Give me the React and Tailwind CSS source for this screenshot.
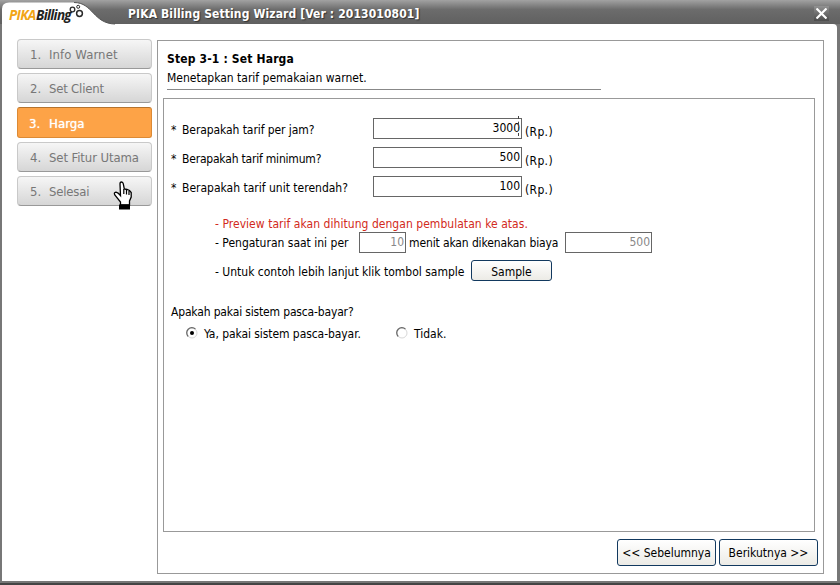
import React from "react";

const steps = [
  { no: "1.", label: "Info Warnet", track: "tracking-[0.1px]" },
  { no: "2.", label: "Set Client", track: "tracking-[-0.2px]" },
  { no: "3.", label: "Harga", track: "tracking-[0.1px]", active: true },
  { no: "4.", label: "Set Fitur Utama", track: "tracking-[-0.1px]" },
  { no: "5.", label: "Selesai", track: "tracking-[-0.2px]" },
];

const prices = [
  { label: "Berapakah tarif per jam?", value: "3000", caret: true, track: "tracking-[-0.08px]" },
  { label: "Berapakah tarif minimum?", value: "500", track: "tracking-[-0.2px]" },
  { label: "Berapakah tarif unit terendah?", value: "100", track: "" },
];

const Logo = () => (
  <div className="relative flex h-6 w-[128px] shrink-0 items-start">
    <svg className="absolute left-0 top-0" width="128" height="25" viewBox="0 0 128 25">
      <path d="M2 25V9Q2 2.500 9 2.500H74C93 2.500 93 23.500 115 24L118 25Z" fill="#fff" />
      <path d="M74 2.500C93 2.500 93 23.500 115 24" fill="none" stroke="#555" strokeWidth="1" />
      <g fill="none" stroke="#2b2b2b">
        <circle cx="72.500" cy="9.500" r="2.300" strokeWidth="1.300" />
        <circle cx="78.200" cy="6.800" r="1.500" strokeWidth="1" />
        <circle cx="79.500" cy="13.500" r="2.900" strokeWidth="1.500" />
      </g>
    </svg>
    <div className="relative ml-[9px] mt-[7px] flex font-['Open_Sans','Noto_Sans',sans-serif] text-[13.500px] font-bold italic leading-4">
      <span className="w-[27px] tracking-[-0.7px] text-[#f2a516]">PIKA</span>
      <span className="tracking-[-0.7px] text-[#222]">Billing</span>
    </div>
  </div>
);

const TitleBar = () => (
  <div className="flex h-6 items-start bg-linear-to-b from-[#a2a2a2] via-[#6c6c6c] via-40% to-[#606060]">
    <Logo />
    <h1 className="grow whitespace-nowrap pt-[6px] text-[12px] font-bold leading-4 tracking-[0.12px] text-white [text-shadow:1px_1px_1px_#333]">
      PIKA Billing Setting Wizard [Ver : 2013010801]
    </h1>
    <button className="mr-[11px] mt-[6px] flex h-[15px] w-[15px] items-center justify-center bg-linear-to-b from-[#929292] to-[#4c4c4c]">
      <svg width="11" height="11" viewBox="0 0 11 11" stroke="#fff" strokeWidth="2.200">
        <path d="M0.500 0.500L10.500 10.500M10.500 0.500L0.500 10.500" />
      </svg>
    </button>
  </div>
);

const StepButton = ({ no, label, track, active }) => (
  <button
    className={
      active
        ? "flex h-[31px] w-[135px] items-center rounded-[3px] border border-[#dc8a35] border-t-[#b5732d] bg-[#fda347] pl-[11px] pt-[2px] text-[13px] text-white [text-shadow:0_0_1px_#fff]"
        : "flex h-[30px] w-[135px] items-center rounded-[4px] border border-[#c9c9c9] border-b-[#999] bg-linear-to-b from-[#f6f6f6] to-[#d6d6d6] pl-3 pt-px text-[13px] text-[#777]"
    }
  >
    <span className={active ? "w-[20px] text-left" : "w-[19px] text-left"}>{no}</span>
    <span className={"whitespace-nowrap " + track}>{label}</span>
  </button>
);

const HandCursor = () => (
  <svg className="absolute left-[96px] top-[142px]" width="20" height="30" viewBox="0 0 20 30">
    <path
      d="M7 3Q7 1 8.500 1Q10 1 10.300 3L11.300 8L14 8.500L16.500 9.500L18.200 11.500V16L16.500 20V24H7.500V21L1.800 14Q0.500 11.500 3 11.200Q5 11.500 7.500 14.500Z"
      fill="#fff"
      stroke="#000"
      strokeWidth="1.300"
    />
    <path d="M10.800 8V13M13.500 8.800V13.500M16 10V14" stroke="#000" strokeWidth="1.200" />
    <path d="M6 23.500H17V28.500H6Z" fill="#000" />
  </svg>
);

const Field = ({ value, className, caret }) => (
  <div className={"relative h-[21px] border border-[#666] pr-px text-right leading-[18px] " + className}>
    {value}
    {caret && <span className="absolute right-[2px] top-[-3px] h-5 border-l border-dashed border-[#444]" />}
  </div>
);

const XpButton = ({ children, className }) => (
  <button
    className={
      "flex items-center justify-center whitespace-nowrap rounded-[3px] border border-[#12395f] bg-linear-to-b from-white to-[#ecebe6] " +
      className
    }
  >
    {children}
  </button>
);

const Radio = ({ checked }) => (
  <svg className="mb-[2px]" width="12" height="12" viewBox="0 0 12 12">
    <circle cx="6" cy="6" r="5" fill="#fff" stroke="#d8d8d8" />
    <path d="M2.200 9.500A5 5 0 0 1 9.500 2.200" fill="none" stroke="#666" strokeWidth="1.200" />
    {checked && <circle cx="6" cy="6" r="2" fill="#000" />}
  </svg>
);

const PriceForm = () => (
  <div className="h-[434px] w-[652px] border border-[#999] pl-[7px] pt-[19px]">
    <div className="flex flex-col gap-2">
      {prices.map((p) => (
        <div key={p.label} className="flex h-[21px] items-start">
          <span className="w-[11px] pt-[4px]">*</span>
          <span className={"w-[191px] pt-[4px] " + p.track}>{p.label}</span>
          <Field value={p.value} caret={p.caret} className="w-[149px]" />
          <span className="ml-[3px] pt-[6px] tracking-[0.35px]">(Rp.)</span>
        </div>
      ))}
    </div>

    <div className="ml-[44px] mt-[19px]">
      <p className="h-[16px] tracking-[0.04px] text-[#d22a20]">
        - Preview tarif akan dihitung dengan pembulatan ke atas.
      </p>
      <div className="flex h-[21px] items-start">
        <span className="w-[144px] pt-[3px]">- Pengaturan saat ini per</span>
        <Field value="10" className="w-[47px] text-[#888]" />
        <span className="ml-[3px] w-[156px] pt-[3px] tracking-[-0.12px]">menit akan dikenakan biaya</span>
        <Field value="500" className="w-[87px] text-[#888]" />
      </div>
      <div className="mt-[7px] flex h-[21px] items-start">
        <span className="w-[256px] pt-[4px]">- Untuk contoh lebih lanjut klik tombol sample</span>
        <XpButton className="h-[21px] w-[81px] pt-[2px]">Sample</XpButton>
      </div>
    </div>

    <p className="mt-[23px] tracking-[-0.16px]">Apakah pakai sistem pasca-bayar?</p>
    <div className="ml-[15px] mt-[6px] flex h-4 items-center">
      <Radio checked />
      <span className="ml-[6px] w-[192px] tracking-[-0.07px]">Ya, pakai sistem pasca-bayar.</span>
      <Radio />
      <span className="ml-[6px]">Tidak.</span>
    </div>
  </div>
);

export default function App() {
  return (
    <div className="h-[585px] w-[840px] overflow-hidden bg-[#777] font-['DejaVu_Sans_Condensed','DejaVu_Sans',sans-serif] text-[12px] leading-4 text-black">
      <TitleBar />
      <div className="ml-[2px] flex h-[557px] w-[835px] rounded-tr-[4px] bg-white">
        <nav className="relative ml-[15px] mt-[15px] flex w-[135px] flex-col gap-[4px]">
          {steps.map((s) => (
            <StepButton key={s.no} {...s} />
          ))}
          <HandCursor />
        </nav>
        <main className="ml-[5px] mt-[16px] h-[534px] w-[667px] whitespace-nowrap border border-[#999] pl-[5px] pt-[10px]">
          <h2 className="ml-1 font-bold tracking-[0.16px]">Step 3-1 : Set Harga</h2>
          <p className="ml-1 mt-[3px] h-5 w-[434px] border-b border-[#888]">Menetapkan tarif pemakaian warnet.</p>
          <div className="h-2" />
          <PriceForm />
          <div className="ml-[454px] mt-[7px] flex gap-[3px]">
            <XpButton className="h-[27px] w-[99px]">&lt;&lt; Sebelumnya</XpButton>
            <XpButton className="h-[27px] w-[99px]">Berikutnya &gt;&gt;</XpButton>
          </div>
        </main>
      </div>
      <div className="mt-[2px] h-[2px] bg-[#444]" />
    </div>
  );
}
